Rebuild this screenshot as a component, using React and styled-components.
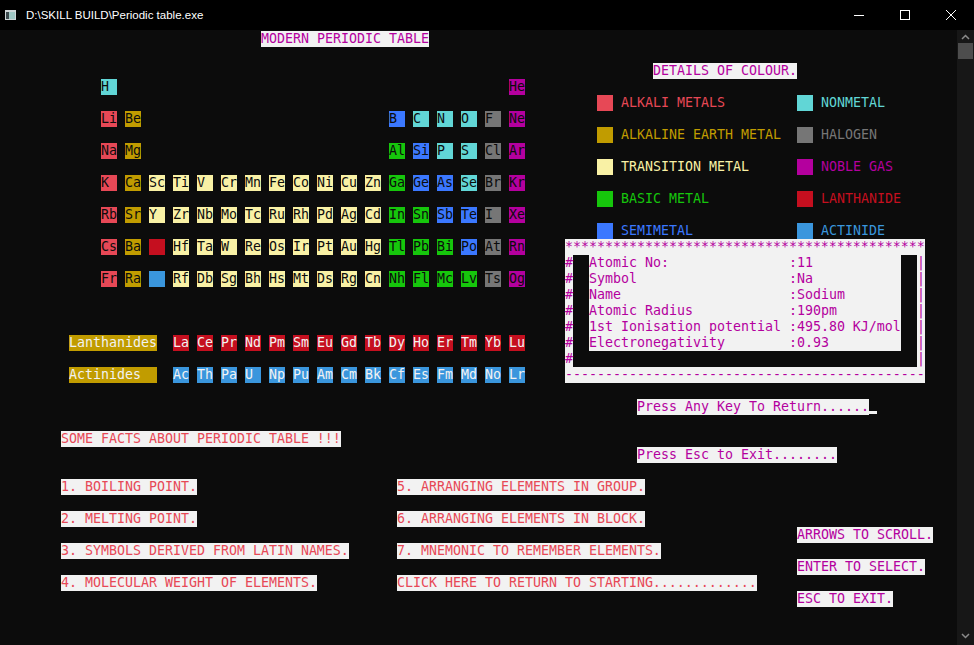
import React from 'react';
import styled, { createGlobalStyle, css } from 'styled-components';

// windows console palette (campbell)
const C = {
  black: '#0c0c0c',
  red: '#c50f1f',
  cyan: '#3a96dd',
  yellow: '#c19c00',
  grey: '#767676',
  bRed: '#e74856',
  bGreen: '#16c60c',
  bBlue: '#3b78ff',
  bCyan: '#61d6d6',
  bMagenta: '#b4009e',
  bYellow: '#f9f1a5',
  bWhite: '#f2f2f2',
};

const KIND = {
  al: { bg: C.bRed, fg: C.black, label: 'ALKALI METALS' },
  ae: { bg: C.yellow, fg: C.black, label: 'ALKALINE EARTH METAL' },
  tm: { bg: C.bYellow, fg: C.black, label: 'TRANSITION METAL' },
  bm: { bg: C.bGreen, fg: C.black, label: 'BASIC METAL' },
  sm: { bg: C.bBlue, fg: C.black, label: 'SEMIMETAL' },
  nm: { bg: C.bCyan, fg: C.black, label: 'NONMETAL' },
  ha: { bg: C.grey, fg: C.black, label: 'HALOGEN' },
  ng: { bg: C.bMagenta, fg: C.black, label: 'NOBLE GAS' },
  la: { bg: C.red, fg: C.bWhite, label: 'LANTHANIDE' },
  ac: { bg: C.cyan, fg: C.bWhite, label: 'ACTINIDE' },
};

const LEGEND = ['al', 'ae', 'tm', 'bm', 'sm', 'nm', 'ha', 'ng', 'la', 'ac'];

// "group:symbol:kind" per period
const PERIODS = [
  '1:H:nm 18:He:ng',
  '1:Li:al 2:Be:ae 13:B:sm 14:C:nm 15:N:nm 16:O:nm 17:F:ha 18:Ne:ng',
  '1:Na:al 2:Mg:ae 13:Al:bm 14:Si:sm 15:P:nm 16:S:nm 17:Cl:ha 18:Ar:ng',
  '1:K:al 2:Ca:ae 3:Sc:tm 4:Ti:tm 5:V:tm 6:Cr:tm 7:Mn:tm 8:Fe:tm 9:Co:tm 10:Ni:tm 11:Cu:tm 12:Zn:tm 13:Ga:bm 14:Ge:sm 15:As:sm 16:Se:nm 17:Br:ha 18:Kr:ng',
  '1:Rb:al 2:Sr:ae 3:Y:tm 4:Zr:tm 5:Nb:tm 6:Mo:tm 7:Tc:tm 8:Ru:tm 9:Rh:tm 10:Pd:tm 11:Ag:tm 12:Cd:tm 13:In:bm 14:Sn:bm 15:Sb:sm 16:Te:sm 17:I:ha 18:Xe:ng',
  '1:Cs:al 2:Ba:ae 3::la 4:Hf:tm 5:Ta:tm 6:W:tm 7:Re:tm 8:Os:tm 9:Ir:tm 10:Pt:tm 11:Au:tm 12:Hg:tm 13:Tl:bm 14:Pb:bm 15:Bi:bm 16:Po:sm 17:At:ha 18:Rn:ng',
  '1:Fr:al 2:Ra:ae 3::ac 4:Rf:tm 5:Db:tm 6:Sg:tm 7:Bh:tm 8:Hs:tm 9:Mt:tm 10:Ds:tm 11:Rg:tm 12:Cn:tm 13:Nh:bm 14:Fl:bm 15:Mc:bm 16:Lv:bm 17:Ts:ha 18:Og:ng',
];

const ELEMENTS = PERIODS.flatMap((line, i) =>
  line.split(' ').map((tok) => {
    const [g, sym, kind] = tok.split(':');
    return { period: i + 1, group: Number(g), sym, kind };
  })
);

const LANTHANIDES = 'La Ce Pr Nd Pm Sm Eu Gd Tb Dy Ho Er Tm Yb Lu'.split(' ');
const ACTINIDES = 'Ac Th Pa U Np Pu Am Cm Bk Cf Es Fm Md No Lr'.split(' ');

const INFO = [
  ['Atomic No:', '11'],
  ['Symbol', 'Na'],
  ['Name', 'Sodium'],
  ['Atomic Radius', '190pm'],
  ['1st Ionisation potential', '495.80 KJ/mol'],
  ['Electronegativity', '0.93'],
];

const FACTS = [
  '1. BOILING POINT.',
  '2. MELTING POINT.',
  '3. SYMBOLS DERIVED FROM LATIN NAMES.',
  '4. MOLECULAR WEIGHT OF ELEMENTS.',
  '5. ARRANGING ELEMENTS IN GROUP.',
  '6. ARRANGING ELEMENTS IN BLOCK.',
  '7. MNEMONIC TO REMEMBER ELEMENTS.',
  'CLICK HERE TO RETURN TO STARTING.............',
];

const GlobalStyle = createGlobalStyle`
  html, body { margin: 0; padding: 0; background: #0c0c0c; }
  body { width: 974px; height: 645px; overflow: hidden; }
`;

const Window = styled.div`
  width: 974px;
  height: 645px;
  display: flex;
  flex-direction: column;
  background: ${C.black};
  overflow: hidden;
`;

const TitleBar = styled.div`
  height: 30px;
  flex: none;
  background: #000;
  display: flex;
  align-items: center;
  color: #fff;
  font-family: "Liberation Sans", "Noto Sans", sans-serif;
  font-size: 11.5px;
`;

const AppIcon = styled.svg`
  flex: none;
  margin: 0 10px 0 5px;
`;

const Caption = styled.span`
  flex: 1;
`;

const Controls = styled.div`
  display: flex;
  height: 100%;
`;

const CtrlBtn = styled.div`
  width: 46px;
  display: flex;
  align-items: center;
  justify-content: center;
`;

const Body = styled.div`
  flex: 1;
  display: flex;
  min-height: 0;
`;

const Screen = styled.div`
  flex: 1;
  padding: 1px 0 0 5px;
  display: grid;
  grid-template-columns: repeat(119, 8px);
  grid-template-rows: repeat(38, 16px);
  font-family: "DejaVu Sans Mono", "Liberation Mono", monospace;
  font-size: 13.29px;
  line-height: 16px;
  white-space: pre;
  overflow: hidden;
`;

const ScrollBar = styled.div`
  width: 17px;
  flex: none;
  background: #171717;
  display: flex;
  flex-direction: column;
  align-items: center;
  padding: 4px 0 6px;
  box-sizing: border-box;
`;

const Thumb = styled.div`
  width: 15px;
  height: 16px;
  margin-top: 3px;
  background: #4d4d4d;
`;

const Track = styled.div`
  flex: 1;
`;

// pinned to a console cell (row/col from 0)
const cell = css`
  grid-row: ${(p) => p.$row + 1} / span ${(p) => p.$rows || 1};
  grid-column: ${(p) => p.$col + 1} / span ${(p) => p.$cols || 1};
  justify-self: start;
  align-self: start;
`;

const Text = styled.span`
  display: block;
  height: 16px;
  color: ${(p) => p.$fg};
  background: ${(p) => p.$bg || 'transparent'};
`;

const Banner = styled(Text)`
  ${cell}
`;

const Table = styled.div`
  grid-row: 4 / span 13;
  grid-column: 13 / span 53;
  display: grid;
  grid-template-columns: repeat(18, 16px);
  grid-auto-rows: 16px;
  column-gap: 8px;
  row-gap: 16px;
`;

const Elem = styled.span`
  grid-row: ${(p) => p.$period};
  grid-column: ${(p) => p.$group};
  width: 16px;
  height: 16px;
  color: ${(p) => p.$fg};
  background: ${(p) => p.$bg};
`;

const FBlock = styled.div`
  grid-row: 20 / span 3;
  grid-column: 9 / span 58;
  display: flex;
  flex-direction: column;
  gap: 16px;
`;

const FRow = styled.div`
  display: flex;
  gap: 8px;
  height: 16px;
`;

const FLabel = styled.span`
  width: 88px;
  margin-right: 8px;
  color: ${C.bWhite};
  background: ${C.yellow};
`;

const FElem = styled.span`
  width: 16px;
  height: 16px;
  color: ${(p) => p.$fg};
  background: ${(p) => p.$bg};
`;

const Legend = styled.div`
  grid-row: 5 / span 9;
  grid-column: 75 / span 40;
  display: grid;
  grid-template-columns: 200px auto;
  grid-template-rows: repeat(5, 16px);
  grid-auto-flow: column;
  row-gap: 16px;
`;

const LegendItem = styled.div`
  display: flex;
  gap: 8px;
  height: 16px;
  color: ${(p) => p.$fg};
`;

const Swatch = styled.span`
  width: 16px;
  height: 16px;
  background: ${(p) => p.$bg};
`;

const InfoBox = styled.div`
  grid-row: 14 / span 9;
  grid-column: 71 / span 45;
  display: flex;
  flex-direction: column;
  color: ${C.bMagenta};
`;

const RuleLine = styled.span`
  height: 16px;
  background: ${C.bWhite};
`;

const InfoMiddle = styled.div`
  display: flex;
  height: 112px;
`;

const Edge = styled.div`
  width: 8px;
  display: flex;
  flex-direction: column;
  background: ${C.bWhite};
`;

const EdgeMark = styled.span`
  height: 16px;
`;

const InfoPanel = styled.div`
  width: 312px;
  margin: 0 16px;
  display: flex;
  flex-direction: column;
`;

const InfoLine = styled.span`
  height: 16px;
  background: ${C.bWhite};
`;

const KeyPrompt = styled.div`
  ${cell}
  display: flex;
  align-items: flex-end;
  height: 16px;
`;

const Cursor = styled.span`
  width: 8px;
  height: 3px;
  margin-bottom: 1px;
  background: ${C.bWhite};
`;

const Facts = styled.div`
  grid-row: 29 / span 7;
  grid-column: 8 / span 90;
  display: grid;
  grid-template-columns: 336px auto;
  grid-template-rows: repeat(4, 16px);
  grid-auto-flow: column;
  row-gap: 16px;
  justify-items: start;
`;

const HelpList = styled.div`
  grid-row: 32 / span 5;
  grid-column: 100 / span 18;
  display: flex;
  flex-direction: column;
  align-items: flex-start;
  gap: 16px;
`;

const pad = (s, n) => s + ' '.repeat(Math.max(0, n - s.length));

export default function App() {
  return (
    <Window>
      <GlobalStyle />
      <TitleBar>
        <AppIcon width="11" height="10" viewBox="0 0 11 10">
          <rect x="0" y="0" width="11" height="10" fill="#cfd6d8" />
          <rect x="1" y="2" width="3" height="7" fill="#3c4a4e" />
          <rect x="4" y="2" width="6" height="7" fill="#9fc7c4" />
        </AppIcon>
        <Caption>D:\SKILL BUILD\Periodic table.exe</Caption>
        <Controls>
          <CtrlBtn>
            <svg width="10" height="10" viewBox="0 0 10 10">
              <path d="M0 5.5h10" stroke="#fff" strokeWidth="1" />
            </svg>
          </CtrlBtn>
          <CtrlBtn>
            <svg width="10" height="10" viewBox="0 0 10 10">
              <rect x="0.5" y="0.5" width="9" height="9" fill="none" stroke="#fff" strokeWidth="1" />
            </svg>
          </CtrlBtn>
          <CtrlBtn>
            <svg width="10" height="10" viewBox="0 0 10 10">
              <path d="M0 0L10 10M10 0L0 10" stroke="#fff" strokeWidth="1" />
            </svg>
          </CtrlBtn>
        </Controls>
      </TitleBar>

      <Body>
        <Screen>
          <Banner $row={0} $col={32} $fg={C.bMagenta} $bg={C.bWhite}>MODERN PERIODIC TABLE</Banner>

          <Table>
            {ELEMENTS.map((e) => (
              <Elem
                key={e.period + '-' + e.group}
                $period={e.period}
                $group={e.group}
                $bg={KIND[e.kind].bg}
                $fg={KIND[e.kind].fg}
              >
                {e.sym}
              </Elem>
            ))}
          </Table>

          <FBlock>
            <FRow>
              <FLabel>Lanthanides</FLabel>
              {LANTHANIDES.map((s) => (
                <FElem key={s} $bg={KIND.la.bg} $fg={KIND.la.fg}>{s}</FElem>
              ))}
            </FRow>
            <FRow>
              <FLabel>Actinides</FLabel>
              {ACTINIDES.map((s) => (
                <FElem key={s} $bg={KIND.ac.bg} $fg={KIND.ac.fg}>{s}</FElem>
              ))}
            </FRow>
          </FBlock>

          <Banner $row={2} $col={81} $fg={C.bMagenta} $bg={C.bWhite}>DETAILS OF COLOUR.</Banner>
          <Legend>
            {LEGEND.map((k) => (
              <LegendItem key={k} $fg={KIND[k].bg}>
                <Swatch $bg={KIND[k].bg} />
                {KIND[k].label}
              </LegendItem>
            ))}
          </Legend>

          <InfoBox>
            <RuleLine>{'*'.repeat(45)}</RuleLine>
            <InfoMiddle>
              <Edge>
                {Array.from({ length: 7 }, (_, i) => <EdgeMark key={i}>#</EdgeMark>)}
              </Edge>
              <InfoPanel>
                {INFO.map(([k, v]) => (
                  <InfoLine key={k}>{pad(pad(k, 25) + ':' + v, 39)}</InfoLine>
                ))}
              </InfoPanel>
              <Edge>
                {Array.from({ length: 7 }, (_, i) => <EdgeMark key={i}>|</EdgeMark>)}
              </Edge>
            </InfoMiddle>
            <RuleLine>{'-'.repeat(45)}</RuleLine>
          </InfoBox>

          <KeyPrompt $row={23} $col={79}>
            <Text $fg={C.bMagenta} $bg={C.bWhite}>Press Any Key To Return......</Text>
            <Cursor />
          </KeyPrompt>
          <Banner $row={26} $col={79} $fg={C.bMagenta} $bg={C.bWhite}>Press Esc to Exit........</Banner>

          <Banner $row={25} $col={7} $fg={C.bRed} $bg={C.bWhite}>SOME FACTS ABOUT PERIODIC TABLE !!!</Banner>
          <Facts>
            {FACTS.map((f) => (
              <Text key={f} $fg={C.bRed} $bg={C.bWhite}>{f}</Text>
            ))}
          </Facts>

          <HelpList>
            <Text $fg={C.bMagenta} $bg={C.bWhite}>ARROWS TO SCROLL.</Text>
            <Text $fg={C.bMagenta} $bg={C.bWhite}>ENTER TO SELECT.</Text>
            <Text $fg={C.bMagenta} $bg={C.bWhite}>ESC TO EXIT.</Text>
          </HelpList>
        </Screen>

        <ScrollBar>
          <svg width="9" height="6" viewBox="0 0 9 6">
            <path d="M1 5L4.5 1.5L8 5" stroke="#8a8a8a" strokeWidth="1.5" fill="none" />
          </svg>
          <Thumb />
          <Track />
          <svg width="9" height="6" viewBox="0 0 9 6">
            <path d="M1 1L4.5 4.5L8 1" stroke="#8a8a8a" strokeWidth="1.5" fill="none" />
          </svg>
        </ScrollBar>
      </Body>
    </Window>
  );
}
